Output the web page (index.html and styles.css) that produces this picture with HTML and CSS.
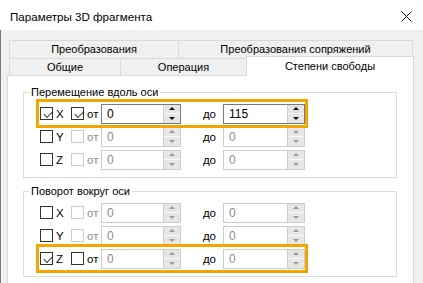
FILE: index.html
```html
<!DOCTYPE html>
<html lang="ru">
<head>
    <meta charset="UTF-8">
    <title>Параметры 3D фрагмента</title>
    <link rel="stylesheet" href="styles.css">
</head>
<body>
    <div class="window">
        <div class="titlebar">
            <span class="title">Параметры 3D фрагмента</span>
            <svg class="close" width="11" height="11" viewBox="0 0 11 11">
                <path d="M0.5 0.5 L10.5 10.5 M10.5 0.5 L0.5 10.5" stroke="#111" stroke-width="1" fill="none"/>
            </svg>
        </div>
        <div class="client">
            <div class="tabs">
                <div class="tab-row upper">
                    <div class="tab w1">Преобразования</div>
                    <div class="tab w2">Преобразования сопряжений</div>
                </div>
                <div class="tab-row lower">
                    <div class="tab w3">Общие</div>
                    <div class="tab w4">Операция</div>
                    <div class="tab w5 active">Степени свободы</div>
                </div>
            </div>
            <div class="panel">
                <fieldset class="group">
                    <legend>Перемещение вдоль оси</legend>
                    <div class="row hl">
                        <label class="axis"><span class="box checked"></span>X</label>
                        <label class="from"><span class="box checked"></span>от</label>
                        <div class="spinbox first"><span class="val">0</span><span class="spin"><i class="up"></i><i class="down"></i></span></div>
                        <span class="to">до</span>
                        <div class="spinbox second"><span class="val">115</span><span class="spin"><i class="up"></i><i class="down"></i></span></div>
                    </div>
                    <div class="row">
                        <label class="axis"><span class="box"></span>Y</label>
                        <label class="from off"><span class="box"></span>от</label>
                        <div class="spinbox first off"><span class="val">0</span><span class="spin"><i class="up"></i><i class="down"></i></span></div>
                        <span class="to">до</span>
                        <div class="spinbox second off"><span class="val">0</span><span class="spin"><i class="up"></i><i class="down"></i></span></div>
                    </div>
                    <div class="row">
                        <label class="axis"><span class="box"></span>Z</label>
                        <label class="from off"><span class="box"></span>от</label>
                        <div class="spinbox first off"><span class="val">0</span><span class="spin"><i class="up"></i><i class="down"></i></span></div>
                        <span class="to">до</span>
                        <div class="spinbox second off"><span class="val">0</span><span class="spin"><i class="up"></i><i class="down"></i></span></div>
                    </div>
                </fieldset>
                <fieldset class="group">
                    <legend>Поворот вокруг оси</legend>
                    <div class="row">
                        <label class="axis"><span class="box"></span>X</label>
                        <label class="from off"><span class="box"></span>от</label>
                        <div class="spinbox first off"><span class="val">0</span><span class="spin"><i class="up"></i><i class="down"></i></span></div>
                        <span class="to">до</span>
                        <div class="spinbox second off"><span class="val">0</span><span class="spin"><i class="up"></i><i class="down"></i></span></div>
                    </div>
                    <div class="row">
                        <label class="axis"><span class="box"></span>Y</label>
                        <label class="from off"><span class="box"></span>от</label>
                        <div class="spinbox first off"><span class="val">0</span><span class="spin"><i class="up"></i><i class="down"></i></span></div>
                        <span class="to">до</span>
                        <div class="spinbox second off"><span class="val">0</span><span class="spin"><i class="up"></i><i class="down"></i></span></div>
                    </div>
                    <div class="row hl">
                        <label class="axis"><span class="box checked"></span>Z</label>
                        <label class="from"><span class="box"></span>от</label>
                        <div class="spinbox first off"><span class="val">0</span><span class="spin"><i class="up"></i><i class="down"></i></span></div>
                        <span class="to">до</span>
                        <div class="spinbox second off"><span class="val">0</span><span class="spin"><i class="up"></i><i class="down"></i></span></div>
                    </div>
                </fieldset>
            </div>
        </div>
    </div>
</body>
</html>
```

FILE: styles.css
```css
body {
    margin: 0;
    font-family: "Liberation Sans", Arial, sans-serif;
    font-size: 11px;
    color: #000;
    overflow: hidden;
}

.window {
    width: 423px;
    height: 283px;
    overflow: hidden;
    background: #f0f0f0;
}

.titlebar {
    height: 30px;
    background: #fff;
    display: flex;
    align-items: center;
    justify-content: space-between;
    padding: 2px 10px 0 10px;
    box-sizing: border-box;
}

.title {
    font-size: 11.6px;
}

.close {
    display: block;
    margin-right: 1px;
}

.client {
    border-left: 1px solid #7a7a7a;
    padding: 10px 0 0 6px;
    height: 253px;
    box-sizing: border-box;
}

/* tabs */
.tabs {
    margin-left: 2px;
}

.tab-row {
    display: flex;
    align-items: flex-start;
}

.tab {
    box-sizing: border-box;
    border: 1px solid #d9d9d9;
    border-bottom: none;
    background: #f0f0f0;
    text-align: center;
    margin-left: -1px;
}

.tab:first-child {
    margin-left: 0;
}

.upper .tab {
    height: 18px;
    line-height: 17px;
}

.lower {
    height: 17px;
}

.lower .tab {
    height: 17px;
    line-height: 16px;
}

.lower .tab.active {
    position: relative;
    z-index: 1;
    background: #fff;
    height: 20px;
    line-height: 18px;
    margin-top: -2px;
}

.w1 { width: 170px; }
.w2 { width: 235px; }
.w3 { width: 112px; }
.w4 { width: 127px; }
.w5 { width: 168px; }

.panel {
    width: 407px;
    height: 220px;
    box-sizing: border-box;
    background: #fff;
    border: 1px solid #d9d9d9;
    padding: 9px 0 0 15px;
}

/* groups */
.group {
    width: 374px;
    box-sizing: border-box;
    margin: 0 0 6px 0;
    border: 1px solid #dcdcdc;
    padding: 2px 0 6px 5px;
}

.group legend {
    padding: 0 2px;
    line-height: 15px;
    font-size: 11px;
}

.row {
    display: flex;
    align-items: center;
    height: 23px;
    width: 266px;
    margin-left: 10px;
    font-size: 11.5px;
}

.row.hl {
    outline: 3px solid #f5a500;
}

.axis,
.from {
    display: flex;
    align-items: center;
    width: 31px;
}

.box {
    width: 13px;
    height: 13px;
    box-sizing: border-box;
    border: 1px solid #333;
    background: #fff;
    margin: 0 3px 0 1px;
    position: relative;
}

.box.checked::after {
    content: "";
    position: absolute;
    left: 2px;
    top: 1px;
    width: 7px;
    height: 4px;
    border-left: 1px solid #333;
    border-bottom: 1px solid #333;
    transform: translate(1px, 2px) rotate(-45deg);
}

.from.off {
    color: #8c8c8c;
}

.from.off .box {
    border-color: #ccc;
}

.to {
    width: 42px;
    box-sizing: border-box;
    text-align: right;
    padding-right: 7px;
}

.spinbox {
    display: flex;
    height: 20px;
    box-sizing: border-box;
    border: 1px solid #7a7a7a;
    background: #fff;
}

.spinbox.first { width: 80px; }
.spinbox.second { width: 82px; }

.spinbox .val {
    flex: 1;
    padding-left: 5px;
    line-height: 18px;
    font-size: 12px;
}

.spin {
    width: 16px;
    display: flex;
    flex-direction: column;
    gap: 1px;
    background: #fafafa;
    border-left: 1px solid #cfcfcf;
}

.spin i {
    flex: 1;
    background: #e6e6e6;
    display: flex;
    align-items: center;
    justify-content: center;
}

.spin i::after {
    content: "";
    border-left: 3px solid transparent;
    border-right: 3px solid transparent;
}

.spin .up::after {
    border-bottom: 3px solid #111;
}

.spin .down::after {
    border-top: 3px solid #111;
}

.spinbox.off {
    border-color: #ccc;
}

.spinbox.off .val {
    color: #8c8c8c;
}

.spinbox.off .spin .up::after {
    border-bottom-color: #9a9a9a;
}

.spinbox.off .spin .down::after {
    border-top-color: #9a9a9a;
}
```
